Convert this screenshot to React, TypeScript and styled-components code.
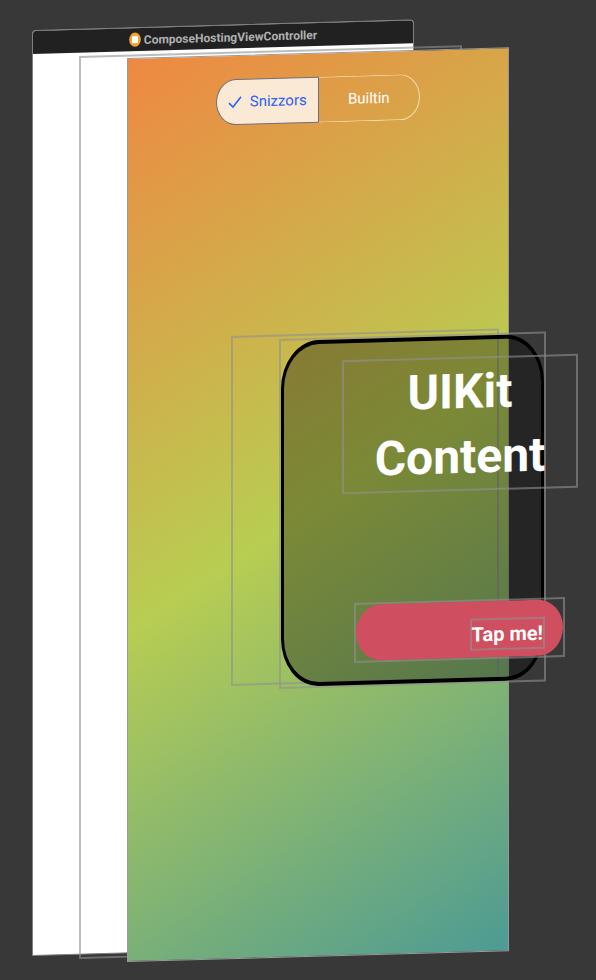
import React, { useState } from "react";
import styled, { createGlobalStyle } from "styled-components";

const TILT = "skewY(-1.6deg)";
const WIRE = "2px solid rgba(145, 145, 145, 0.6)";

const GlobalStyle = createGlobalStyle`
  * { box-sizing: border-box; }
  body { margin: 0; background: #383838; }
  button { font: inherit; color: inherit; margin: 0; padding: 0; cursor: pointer; }
`;

const Canvas = styled.main`
  position: relative;
  min-height: max(100vh, 900px);
  overflow: hidden;
  background: #383838;
  font-family: Roboto, "Liberation Sans", sans-serif;
`;

/* One exploded view layer, placed on the free canvas: top right bottom left. */
const Layer = styled.div<{ $inset: string }>`
  position: absolute;
  inset: ${(p) => p.$inset};
  transform: ${TILT};
  transform-origin: left top;
`;

const Wireframe = styled(Layer)`
  border: ${WIRE};
  pointer-events: none;
`;

const WindowLayer = styled(Layer)`
  display: flex;
  flex-direction: column;
  border: 1px solid #808080;
  border-radius: 4px 4px 0 0;
  background: #fff;
`;

const TitleBar = styled.header`
  display: flex;
  align-items: center;
  justify-content: center;
  gap: 3px;
  height: 23px;
  border-radius: 3px 3px 0 0;
  background: #212121;
  color: #b0b0b0;
  font-size: 12px;
  font-weight: 700;
  line-height: 20px;
`;

const ContentLayer = styled(Layer)`
  display: flex;
  justify-content: center;
  align-items: flex-start;
  padding-top: 23px;
  border: 1px solid #999;
  background: linear-gradient(148deg, #ef8842 0%, #b8cd52 50%, #4d9b94 100%);
`;

const Segments = styled.div`
  display: flex;
  width: 204px;
  height: 46px;
  font-size: 15px;
  line-height: 20px;
`;

const Segment = styled.button<{ $selected: boolean; $side: "start" | "end" }>`
  flex: 1;
  display: flex;
  align-items: center;
  justify-content: center;
  gap: 8px;
  border: 1px solid ${(p) => (p.$selected ? "#70707c" : "#f3dcae")};
  border-radius: ${(p) =>
    p.$side === "start" ? "20px 0 0 20px / 23px 0 0 23px" : "0 20px 20px 0 / 0 23px 23px 0"};
  ${(p) => p.$side === "end" && "border-left-width: 0;"}
  background: ${(p) => (p.$selected ? "#fae9d5" : "transparent")};
  color: ${(p) => (p.$selected ? "#2f62ef" : "#fff")};
`;

const CardLayer = styled(Layer)`
  display: flex;
  flex-direction: column;
  justify-content: space-between;
  padding: 17px 0 18px 58px;
  border: solid #000;
  border-width: 4px 3px;
  border-radius: 38px / 48px;
  background: rgba(0, 0, 0, 0.33);
`;

/* The heading and the button float in front of the card and overhang its right edge. */
const Heading = styled.h1`
  margin: 0 -37px 0 0;
  border: ${WIRE};
  color: #fff;
  text-align: center;
  font-size: 48px;
  font-weight: 700;
  line-height: 65px;
`;

const TapFrame = styled.div`
  display: flex;
  height: 60px;
  margin: 0 -24px 0 12px;
  border: ${WIRE};
`;

const TapButton = styled.button`
  flex: 1;
  display: flex;
  align-items: center;
  justify-content: flex-end;
  padding: 10px 18px 0 0;
  border: 0;
  border-radius: 25px / 28px;
  background: #cf4e5f;
`;

const TapLabel = styled.span`
  border: ${WIRE};
  color: #fff;
  font-size: 20px;
  font-weight: 700;
  line-height: 28px;
`;

function ControllerIcon() {
  return (
    <svg width="12" height="15" viewBox="0 0 12 15" aria-hidden="true">
      <ellipse cx="6" cy="7.5" rx="5.8" ry="7.2" fill="#efa52e" />
      <rect x="3" y="4" width="6" height="7" rx="1" fill="#fff" />
    </svg>
  );
}

function CheckIcon() {
  return (
    <svg width="14" height="14" viewBox="0 0 14 14" fill="none" aria-hidden="true">
      <path d="M1 8 L5 12 L13 2" stroke="currentColor" strokeWidth="1.6" />
    </svg>
  );
}

export default function App() {
  const [selected, setSelected] = useState("Snizzors");
  return (
    <>
      <GlobalStyle />
      <Canvas>
        <WindowLayer $inset="30px 182px 24px 32px">
          <TitleBar>
            <ControllerIcon />
            ComposeHostingViewController
          </TitleBar>
        </WindowLayer>
        <Wireframe $inset="56px 134px 21px 79px" />
        <ContentLayer $inset="58px 87px 18px 127px">
          <Segments role="group" aria-label="Content source">
            {(["Snizzors", "Builtin"] as const).map((name, i) => (
              <Segment
                key={name}
                type="button"
                $side={i === 0 ? "start" : "end"}
                $selected={selected === name}
                aria-pressed={selected === name}
                onClick={() => setSelected(name)}
              >
                {selected === name && <CheckIcon />}
                {name}
              </Segment>
            ))}
          </Segments>
        </ContentLayer>
        <Wireframe $inset="336px 97px 294px 231px" />
        <Wireframe $inset="339px 50px 291px 279px" />
        <CardLayer $inset="341px 52px 293px 281px">
          <Heading>
            UIKit
            <br />
            Content
          </Heading>
          <TapFrame>
            <TapButton type="button">
              <TapLabel>Tap me!</TapLabel>
            </TapButton>
          </TapFrame>
        </CardLayer>
      </Canvas>
    </>
  );
}
